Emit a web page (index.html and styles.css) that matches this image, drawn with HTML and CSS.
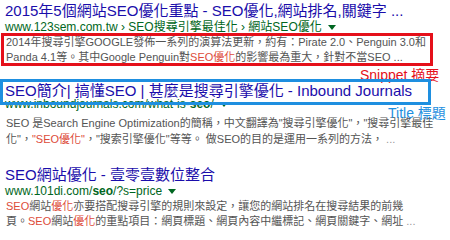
FILE: index.html
```html
<!DOCTYPE html>
<html lang="zh-Hant">
<head>
    <meta charset="UTF-8">
    <title>SEO Snippet 與 Title</title>
    <link rel="stylesheet" href="styles.css">
</head>
<body>
    <div class="page">
        <div class="result">
            <div class="title">2015年5個網站SEO優化重點 - SEO優化,網站排名,關鍵字 ...</div>
            <div class="url">www.123sem.com.tw › SEO搜尋引擎最佳化 › 網站SEO優化<span class="caret"></span></div>
            <div class="snippet">
                <span class="line">2014年搜尋引擎GOOGLE發佈一系列的演算法更新，約有：Pirate 2.0、Penguin 3.0和</span>
                <span class="line">Panda 4.1等。其中Google Penguin對<em>SEO優化</em>的影響最為重大，針對不當SEO ...</span>
            </div>
        </div>

        <div class="result result-marked">
            <div class="title">SEO簡介| 搞懂SEO | 甚麼是搜尋引擎優化 - Inbound Journals</div>
            <div class="url">www.inboundjournals.com/what-is-<b>seo</b>/<span class="caret"></span></div>
            <div class="snippet">
                <span class="line">SEO 是Search Engine Optimization的簡稱，中文翻譯為"搜尋引擎優化"，"搜尋引擎最佳</span>
                <span class="line">化"，<em>"SEO優化"</em>，"搜索引擎優化"等等。 做SEO的目的是運用一系列的方法， <span class="more">...</span></span>
            </div>
        </div>

        <div class="result">
            <div class="title">SEO網站優化 - 壹零壹數位整合</div>
            <div class="url">www.101di.com/<b>seo</b>/?s=price<span class="caret"></span></div>
            <div class="snippet">
                <span class="line"><em>SEO</em>網站<em>優化</em>亦要搭配搜尋引擎的規則來設定，讓您的網站排名在搜尋結果的前幾</span>
                <span class="line">頁。<em>SEO</em>網站<em>優化</em>的重點項目：網頁標題、網頁內容中繼標記、網頁關鍵字、網址 <span class="more">...</span></span>
            </div>
        </div>

        <!-- annotations drawn over the results -->
        <div class="mark mark-snippet"></div>
        <div class="label label-snippet">Snippet 摘要</div>
        <div class="mark mark-title"></div>
        <div class="label label-title">Title 標題</div>
    </div>
</body>
</html>
```

FILE: styles.css
```css
body {
    margin: 0;
    background: #fff;
    font-family: "Liberation Sans", Arial, "Noto Sans CJK TC", sans-serif;
}
.page {
    position: relative;
    width: 450px;
    height: 240px;
    overflow: hidden;
    padding: 2px 0 0 5px;
    box-sizing: border-box;
}
.result {
    margin-bottom: 17px;
}
.title {
    font-size: 15px;
    line-height: 17px;
    color: #1a0dab;
    white-space: nowrap;
}
.url {
    font-size: 12px;
    line-height: 16px;
    color: #006621;
    white-space: nowrap;
}
.url b {
    font-weight: bold;
}
.caret {
    display: inline-block;
    margin-left: 6px;
    vertical-align: middle;
    border-top: 5px solid #006621;
    border-left: 4px solid transparent;
    border-right: 4px solid transparent;
}
.snippet {
    font-size: 11px;
    line-height: 15px;
    color: #545454;
    padding-left: 1px;
}
.snippet .line {
    display: block;
    white-space: nowrap;
}
.snippet em {
    font-style: normal;
    color: #dd4b39;
}
.snippet .more {
    color: #999;
}
/* the boxed result sits a little tighter under its title */
.result-marked {
    margin-bottom: 19px;
}
.result-marked .url {
    margin: -3px 0 3px;
}
.result-marked .snippet {
    line-height: 16px;
}
.mark {
    position: absolute;
    box-sizing: border-box;
}
.mark-snippet {
    left: 1px;
    top: 33px;
    width: 432px;
    height: 33px;
    border: 3px solid #e5101a;
}
.mark-title {
    left: 0;
    top: 79px;
    width: 431px;
    height: 26px;
    border: 3px solid #1e8fe0;
}
.label {
    position: absolute;
    font-size: 14px;
    line-height: 16px;
    white-space: nowrap;
}
.label-snippet {
    left: 360px;
    top: 67px;
    color: #e5101a;
}
.label-title {
    left: 388px;
    top: 105px;
    color: #1e8fe0;
}
```
